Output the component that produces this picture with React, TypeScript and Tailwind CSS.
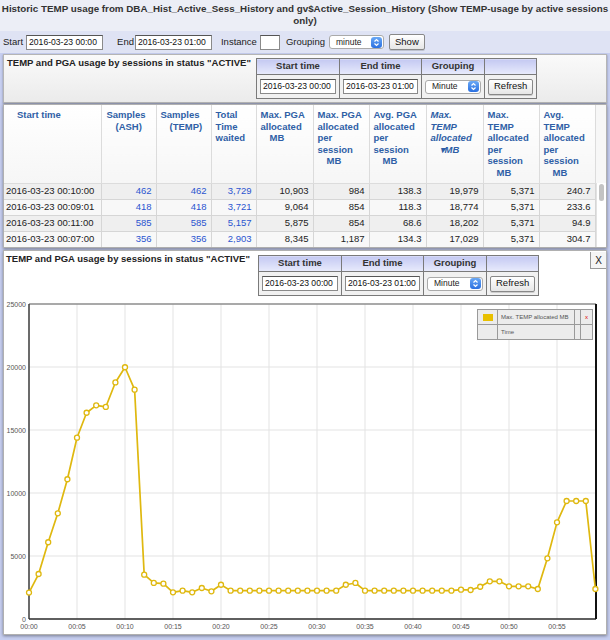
import React from 'react';

const rows = [
    ['2016-03-23 00:10:00', '462', '462', '3,729', '10,903', '984', '138.3', '19,979', '5,371', '240.7'],
    ['2016-03-23 00:09:01', '418', '418', '3,721', '9,064', '854', '118.3', '18,774', '5,371', '233.6'],
    ['2016-03-23 00:11:00', '585', '585', '5,157', '5,875', '854', '68.6', '18,202', '5,371', '94.9'],
    ['2016-03-23 00:07:00', '356', '356', '2,903', '8,345', '1,187', '134.3', '17,029', '5,371', '304.7'],
];

const cols = [
    { w: 'w-[97px]', lines: ['Start time'], last: '', pl: 'pl-[13px]' },
    { w: 'w-[55px]', lines: ['Samples'], last: '(ASH)', pl: 'pl-[5px]' },
    { w: 'w-[55px]', lines: ['Samples'], last: '(TEMP)', pl: 'pl-[4px]' },
    { w: 'w-[45px]', lines: ['Total', 'Time', 'waited'], last: '', pl: 'pl-[4px]' },
    { w: 'w-[57px]', lines: ['Max. PGA', 'allocated'], last: 'MB', pl: 'pl-[4px]' },
    { w: 'w-[56px]', lines: ['Max. PGA', 'allocated', 'per', 'session'], last: 'MB', pl: 'pl-[4px]' },
    { w: 'w-[57px]', lines: ['Avg. PGA', 'allocated', 'per', 'session'], last: 'MB', pl: 'pl-[4px]' },
    { w: 'w-[57px]', lines: ['Max.', 'TEMP', 'allocated'], last: '▾MB', pl: 'pl-[4px]', italic: true },
    { w: 'w-[56px]', lines: ['Max.', 'TEMP', 'allocated', 'per', 'session'], last: 'MB', pl: 'pl-[4px]' },
    { w: 'w-[56px]', lines: ['Avg.', 'TEMP', 'allocated', 'per', 'session'], last: 'MB', pl: 'pl-[4px]' },
];

// max TEMP allocated MB per minute, 00:00 .. 00:59
const temp = [
    2100, 3570, 6090, 8390, 11090, 14390, 16370, 16960, 16830, 18774, 19979, 18202, 3520, 2860, 2800, 2120, 2250, 2120, 2460, 2200, 2720,
    2250, 2250, 2250, 2250, 2250, 2250, 2250, 2250, 2250, 2250, 2250, 2250,
    2720, 2860,
    2250, 2250, 2250, 2250, 2250, 2250, 2250, 2250, 2250, 2250,
    2330, 2300, 2560, 2990, 2990, 2590, 2590, 2590, 2380, 4815, 7670, 9365, 9365, 9365, 2380,
];

const px = (m: number) => 29 + m * 9.6;
const py = (v: number) => 620 - v * 0.0126;

function SelectBox({ label, w }: { label: string; w: string }) {
    return (
        <div className={`${w} h-[14px] flex items-center justify-between bg-white border border-[#aaa] rounded-[3px] pl-[6px] pr-[1px] text-[8.5px] text-[#222]`}>
            <span>{label}</span>
            <span className="w-[11px] h-[11px] rounded-[3px] bg-linear-to-b from-[#6aa8f5] to-[#2a6fe0] flex items-center justify-center">
                <svg width="7" height="9" viewBox="0 0 7 9">
                    <path d="M1.5 3.5 L3.5 1.5 L5.5 3.5 M1.5 5.5 L3.5 7.5 L5.5 5.5" fill="none" stroke="white" strokeWidth="1.2" />
                </svg>
            </span>
        </div>
    );
}

function Btn({ label }: { label: string }) {
    return (
        <div className="h-[16px] px-[5px] flex items-center border border-[#888] rounded-[2px] bg-linear-to-b from-white to-[#e6e6e6] text-[9.5px] text-[#111] shadow-[0_1px_0_rgba(0,0,0,0.15)]">
            {label}
        </div>
    );
}

function TextBox({ value, w }: { value: string; w: string }) {
    return (
        <div className={`${w} h-[15px] bg-white border border-[#8a8a8a] border-t-[#555] px-[2px] text-[8.6px] leading-[13px] text-[#111] overflow-hidden whitespace-nowrap`}>
            {value}
        </div>
    );
}

function RangeTable() {
    const th = 'h-[16px] border border-[#7a7a7a] bg-linear-to-b from-[#c4c9f2] to-[#e9ebfc] text-[9.5px] font-bold text-[#333]';
    const td = 'h-[24px] border border-[#7a7a7a] bg-[#f1f1f1] px-[3px]';
    return (
        <table className="border-collapse">
            <thead>
                <tr>
                    <th className={`${th} w-[82px]`}>Start time</th>
                    <th className={`${th} w-[81px]`}>End time</th>
                    <th className={`${th} w-[62px]`}>Grouping</th>
                    <th className={`${th} w-[48px]`}></th>
                </tr>
            </thead>
            <tbody>
                <tr>
                    <td className={td}><TextBox value="2016-03-23 00:00" w="w-[76px]" /></td>
                    <td className={td}><TextBox value="2016-03-23 01:00" w="w-[75px]" /></td>
                    <td className={td}><SelectBox label="Minute" w="w-[56px]" /></td>
                    <td className={td}><Btn label="Refresh" /></td>
                </tr>
            </tbody>
        </table>
    );
}

function Chart() {
    const line = temp.map((v, i) => `${px(i)},${py(v)}`).join(' ');
    const vgrid = [5, 10, 15, 20, 25, 30, 35, 40, 45, 50, 55];
    const hgrid = [5000, 10000, 15000, 20000];
    return (
        <svg width="600" height="337" viewBox="4 298 600 337" className="block">
            {vgrid.map(m => (
                <line key={m} x1={px(m)} y1={305} x2={px(m)} y2={620} stroke="#e3e3e3" strokeWidth="1" />
            ))}
            {hgrid.map(v => (
                <line key={v} x1={29} y1={py(v)} x2={596} y2={py(v)} stroke="#e3e3e3" strokeWidth="1" />
            ))}
            <line x1={29} y1={305} x2={596} y2={305} stroke="#8c8c8c" strokeWidth="1.5" />
            <line x1={29} y1={305} x2={29} y2={620} stroke="#3a3a3a" strokeWidth="1.5" />
            <line x1={29} y1={620} x2={596} y2={620} stroke="#2a2a2a" strokeWidth="1.5" />
            <line x1={596} y1={305} x2={596} y2={620} stroke="#111" strokeWidth="2" />
            {[0, 5000, 10000, 15000, 20000, 25000].map(v => (
                <text key={v} x={26} y={py(v) + 2.5} textAnchor="end" fontSize="7" fill="#555" fontFamily="Liberation Sans, Arial, sans-serif">{v}</text>
            ))}
            {[0, 5, 10, 15, 20, 25, 30, 35, 40, 45, 50, 55].map(m => (
                <text key={m} x={px(m)} y={630} textAnchor="middle" fontSize="7" fill="#555" fontFamily="Liberation Sans, Arial, sans-serif">
                    {`00:${String(m).padStart(2, '0')}`}
                </text>
            ))}
            <polyline points={line} fill="none" stroke="#dfb80f" strokeWidth="1.7" strokeLinejoin="round" />
            {temp.map((v, i) => (
                <circle key={i} cx={px(i)} cy={py(v)} r="2.5" fill="white" stroke="#dfb80f" strokeWidth="1.3" />
            ))}
        </svg>
    );
}

export default function App() {
    return (
        <div className="w-[610px] h-[640px] overflow-hidden bg-[#c6cef0] font-['Liberation_Sans',Arial,sans-serif] text-[#222]">
            <div className="h-[31px] bg-[#eceef6] pt-[3px] px-[1px] text-center text-[9.8px] leading-[12px] font-bold text-[#333]">
                Historic TEMP usage from DBA_Hist_Active_Sess_History and gv$Active_Session_History (Show TEMP-usage by active sessions only)
            </div>

            <div className="h-[22px] bg-[#dfe3f4] flex items-center pl-[3px] text-[9.5px] text-[#222]">
                <span>Start</span>
                <div className="ml-[3px]"><TextBox value="2016-03-23 00:00" w="w-[77px]" /></div>
                <span className="ml-[14px]">End</span>
                <div className="ml-[1px]"><TextBox value="2016-03-23 01:00" w="w-[77px]" /></div>
                <span className="ml-[9px]">Instance</span>
                <div className="ml-[3px]"><TextBox value="" w="w-[20px]" /></div>
                <span className="ml-[6px]">Grouping</span>
                <div className="ml-[4px]"><SelectBox label="minute" w="w-[55px]" /></div>
                <div className="ml-[5px]"><Btn label="Show" /></div>
            </div>

            <div className="mt-[1px] mx-[3px] h-[49px] flex bg-linear-to-b from-[#fafafa] to-[#ebebeb] border border-[#b5b5b5] shadow-[0_1px_2px_rgba(0,0,0,0.35)]">
                <div className="w-[252px] pl-[3px] pt-[2px] text-[9.5px] leading-[12px] font-bold text-[#222] whitespace-nowrap">
                    TEMP and PGA usage by sessions in status "ACTIVE"
                </div>
                <div className="pt-[3px]">
                    <RangeTable />
                </div>
            </div>

            <div className="mt-[1px] mx-[3px] h-[144px] flex bg-white border border-[#b0b0b0] shadow-[0_1px_3px_rgba(0,0,0,0.4)] overflow-hidden">
                <table className="border-collapse table-fixed w-[591px] text-[9.5px]">
                    <thead>
                        <tr>
                            {cols.map((c, i) => (
                                <th key={i} className={`${c.w} ${c.pl} h-[78px] align-top pt-[4px] text-left font-bold text-[#2f5fa6] bg-linear-to-b from-white to-[#f6f6f6] border-r border-b border-[#dcdcdc] leading-[11.5px] ${c.italic ? 'italic' : ''}`}>
                                    <div>
                                        {c.lines.map((l, j) => <div key={j} className="whitespace-nowrap">{l}</div>)}
                                        {c.last && <div className="pl-[9px] whitespace-nowrap">{c.last}</div>}
                                    </div>
                                </th>
                            ))}
                        </tr>
                    </thead>
                    <tbody>
                        {rows.map((r, i) => (
                            <tr key={i} className={i % 2 === 0 ? 'bg-[#efefef]' : 'bg-[#f8f8f8]'}>
                                {r.map((v, j) => (
                                    <td key={j} className={`h-[16px] border-r border-b border-[#d6d6d6] ${j === 0 ? 'text-left pl-[2px]' : 'text-right pr-[4px]'} ${j >= 1 && j <= 3 ? 'text-[#2b55d0]' : 'text-[#222]'}`}>
                                        {v}
                                    </td>
                                ))}
                            </tr>
                        ))}
                    </tbody>
                </table>
                <div className="flex-1 flex flex-col bg-[#f7f7f7]">
                    <div className="h-[78px]"></div>
                    <div className="flex-1 bg-white border-l border-[#e2e2e2] pt-[1px] flex justify-center">
                        <div className="w-[5px] h-[17px] rounded-full bg-[#c3c3c3]"></div>
                    </div>
                </div>
            </div>

            <div className="mt-[2px] mx-[3px] h-[385px] bg-white border border-[#b0b0b0] shadow-[0_1px_3px_rgba(0,0,0,0.4)] flex flex-col">
                <div className="h-[47px] flex">
                    <div className="w-[254px] pl-[2px] pt-[2px] text-[9.5px] leading-[12px] font-bold text-[#222] whitespace-nowrap">
                        TEMP and PGA usage by sessions in status "ACTIVE"
                    </div>
                    <div className="pt-[4px]">
                        <RangeTable />
                    </div>
                    <div className="ml-auto mt-[1px] w-[16px] h-[17px] border-l border-b border-[#999] bg-[#f5f5f5] text-[10px] flex items-center justify-center text-[#222]">
                        X
                    </div>
                </div>
                <div className="relative">
                    <Chart />
                    <div className="absolute left-[473px] top-[12px] w-[116px] border border-[#9a9a9a] bg-[#ececec] text-[6px] text-[#555]">
                        <div className="flex h-[15px] border-b border-[#9a9a9a]">
                            <div className="w-[20px] border-r border-[#9a9a9a] flex items-center justify-center">
                                <div className="w-[10px] h-[7px] bg-[#e8c000]"></div>
                            </div>
                            <div className="w-[77px] border-r border-[#9a9a9a] flex items-center pl-[3px] whitespace-nowrap">Max. TEMP allocated MB</div>
                            <div className="w-[6px] border-r border-[#9a9a9a]"></div>
                            <div className="flex-1 flex items-center justify-center text-[#e00000]">x</div>
                        </div>
                        <div className="flex h-[14px]">
                            <div className="w-[20px] border-r border-[#9a9a9a]"></div>
                            <div className="w-[77px] border-r border-[#9a9a9a] flex items-center pl-[3px]">Time</div>
                            <div className="w-[6px] border-r border-[#9a9a9a]"></div>
                            <div className="flex-1"></div>
                        </div>
                    </div>
                </div>
            </div>
        </div>
    );
}
